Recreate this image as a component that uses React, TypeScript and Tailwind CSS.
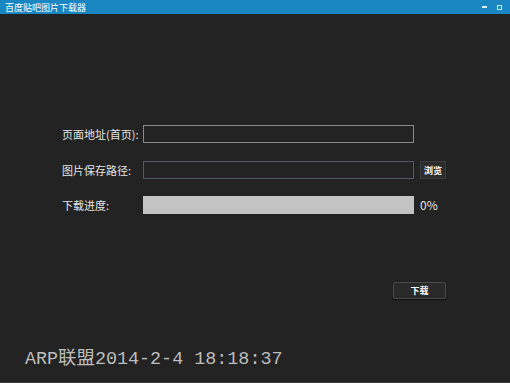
import React from 'react';

const cjk = { fontFamily: '"Noto Sans CJK SC", "Noto Sans", sans-serif' };

const Label: React.FC<{ text: string }> = ({ text }) => (
  <div className="w-[81px] shrink-0 whitespace-nowrap text-[11px] leading-none text-[#e6e6e6]" style={cjk}>
    {text}
  </div>
);

export default function App() {
  return (
    <div className="w-[510px] h-[383px] bg-[#232323] flex flex-col overflow-hidden border-b border-[#3a3a3a]">
      {/* title bar */}
      <div className="h-[14px] shrink-0 bg-[#1b87c2] flex items-center justify-between pl-[5px] pr-[8px]">
        <span className="text-[9px] leading-none text-white" style={cjk}>百度贴吧图片下载器</span>
        <div className="flex items-center gap-[10px]">
          <span className="block w-[5px] h-[2px] bg-[#d8eef8]" />
          <span className="block w-[5px] h-[5px] border border-[#cde6f3]" />
        </div>
      </div>

      {/* form */}
      <div className="flex flex-col pl-[62px] pt-[111px]">
        <div className="flex items-center h-[18px]">
          <Label text="页面地址(首页):" />
          <div className="w-[271px] h-[18px] border border-[#8a8a8a] bg-[#232323]" />
        </div>
        <div className="flex items-center h-[18px] mt-[18px]">
          <Label text="图片保存路径:" />
          <div className="w-[271px] h-[18px] border border-[#4f5a61] bg-[#232323]" />
          <button
            className="ml-[6px] w-[26px] h-[18px] bg-[#2c2c2c] border border-[#3c3c3c] text-[9px] font-bold leading-none text-white flex items-center justify-center"
            style={cjk}
          >
            浏览
          </button>
        </div>
        <div className="flex items-center h-[18px] mt-[17px]">
          <Label text="下载进度:" />
          <div className="w-[271px] h-[18px] bg-[#c3c3c3]" />
          <span className="ml-[6px] text-[12px] leading-none text-[#e6e6e6]" style={cjk}>0%</span>
        </div>
        <div className="flex justify-end w-[384px] mt-[68px]">
          <button
            className="w-[53px] h-[17px] bg-[#2a2a2a] border border-[#4a4a4a] rounded-[2px] text-[9px] font-bold leading-none text-white flex items-center justify-center shadow-[0_1px_1px_rgba(0,0,0,0.6)]"
            style={cjk}
          >
            下载
          </button>
        </div>
      </div>

      {/* footer stamp */}
      <div
        className="mt-[52px] pl-[25px] text-[18.4px] leading-none text-[#bdbdbd]"
        style={{ fontFamily: '"Liberation Mono", "Noto Sans CJK SC", monospace' }}
      >
        ARP联盟2014-2-4 18:18:37
      </div>
    </div>
  );
}
